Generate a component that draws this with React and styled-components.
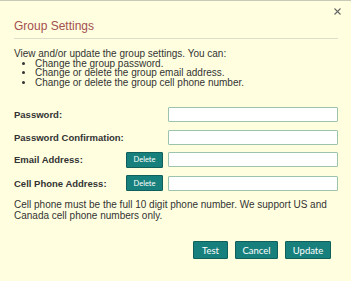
import React from "react";
import styled, { createGlobalStyle } from "styled-components";

const Global = createGlobalStyle`
  html, body { margin: 0; padding: 0; background: #ffffe0; }
  body { font-family: "Liberation Sans", Arial, sans-serif; color: #333; }
`;

const Dialog = styled.div`
  box-sizing: border-box;
  width: 351px;
  height: 281px;
  background: #ffffe0;
  border-top: 1px solid #c9c9b8;
  padding: 0 13px 0 14px;
  display: flex;
  flex-direction: column;
`;

const CloseRow = styled.div`
  display: flex;
  justify-content: flex-end;
  height: 18px;
  padding-top: 6px;
  box-sizing: border-box;
`;

const CloseButton = styled.button`
  width: 8px;
  height: 8px;
  padding: 0;
  margin-right: -3px;
  border: none;
  background: none;
  display: flex;
  align-items: center;
  justify-content: center;
  cursor: pointer;
`;

const Title = styled.h2`
  margin: 0;
  font-size: 12px;
  line-height: 14px;
  font-weight: normal;
  color: #a3504f;
  padding-bottom: 5px;
  border-bottom: 1px solid #dcdccb;
`;

const Intro = styled.div`
  margin-top: 10px;
  font-size: 10px;
  line-height: 9.6px;
`;

const List = styled.ul`
  margin: 0;
  padding: 0 0 0 21px;
  list-style: disc;
`;

const Form = styled.div`
  margin-top: 20px;
  display: grid;
  grid-template-columns: 107px 37px 170px;
  column-gap: 5px;
  row-gap: 7.3px;
  align-items: center;
`;

const Label = styled.label`
  grid-column: 1;
  font-size: 9.5px;
  font-weight: bold;
  line-height: 15px;
  white-space: nowrap;
`;

const Input = styled.input`
  grid-column: 3;
  box-sizing: border-box;
  height: 15px;
  width: 170px;
  margin: 0;
  border: 1px solid #9cc4ac;
  border-radius: 1px;
  background: #fff;
  padding: 0 3px;
  font-size: 9px;
`;

const TealButton = styled.button`
  box-sizing: border-box;
  background: #17807c;
  border: 1px solid #0f5f5c;
  border-radius: 1px;
  color: #fff;
  font-family: Lato, "Liberation Sans", sans-serif;
  padding: 0;
  cursor: pointer;
  width: ${(p) => p.$w}px;
  height: ${(p) => p.$h}px;
  font-size: ${(p) => p.$fs}px;
`;

const DeleteButton = styled(TealButton)`
  grid-column: 2;
`;

const Note = styled.p`
  margin: 8px 0 0;
  font-size: 10px;
  line-height: 11px;
`;

const Actions = styled.div`
  margin-top: 20px;
  display: flex;
  justify-content: flex-end;
  gap: 7px;
  padding-right: 7px;
`;

const rows = [
  { label: "Password:", del: false },
  { label: "Password Confirmation:", del: false },
  { label: "Email Address:", del: true },
  { label: "Cell Phone Address:", del: true },
];

export default function App() {
  return (
    <>
      <Global />
      <Dialog>
        <CloseRow>
          <CloseButton aria-label="Close">
            <svg width="7" height="7" viewBox="0 0 7 7">
              <path d="M0.5 0.5L6.5 6.5M6.5 0.5L0.5 6.5" stroke="#666" strokeWidth="1.1" />
            </svg>
          </CloseButton>
        </CloseRow>
        <Title>Group Settings</Title>
        <Intro>
          View and/or update the group settings. You can:
          <List>
            <li>Change the group password.</li>
            <li>Change or delete the group email address.</li>
            <li>Change or delete the group cell phone number.</li>
          </List>
        </Intro>
        <Form>
          {rows.map((r) => (
            <React.Fragment key={r.label}>
              <Label>{r.label}</Label>
              {r.del && (
                <DeleteButton $w={37} $h={16} $fs={7.5}>
                  Delete
                </DeleteButton>
              )}
              <Input type={r.label.startsWith("Password") ? "password" : "text"} />
            </React.Fragment>
          ))}
        </Form>
        <Note>
          Cell phone must be the full 10 digit phone number. We support US and
          Canada cell phone numbers only.
        </Note>
        <Actions>
          <TealButton $w={35} $h={18} $fs={9.5}>Test</TealButton>
          <TealButton $w={43} $h={18} $fs={9.5}>Cancel</TealButton>
          <TealButton $w={46} $h={18} $fs={9.5}>Update</TealButton>
        </Actions>
      </Dialog>
    </>
  );
}
